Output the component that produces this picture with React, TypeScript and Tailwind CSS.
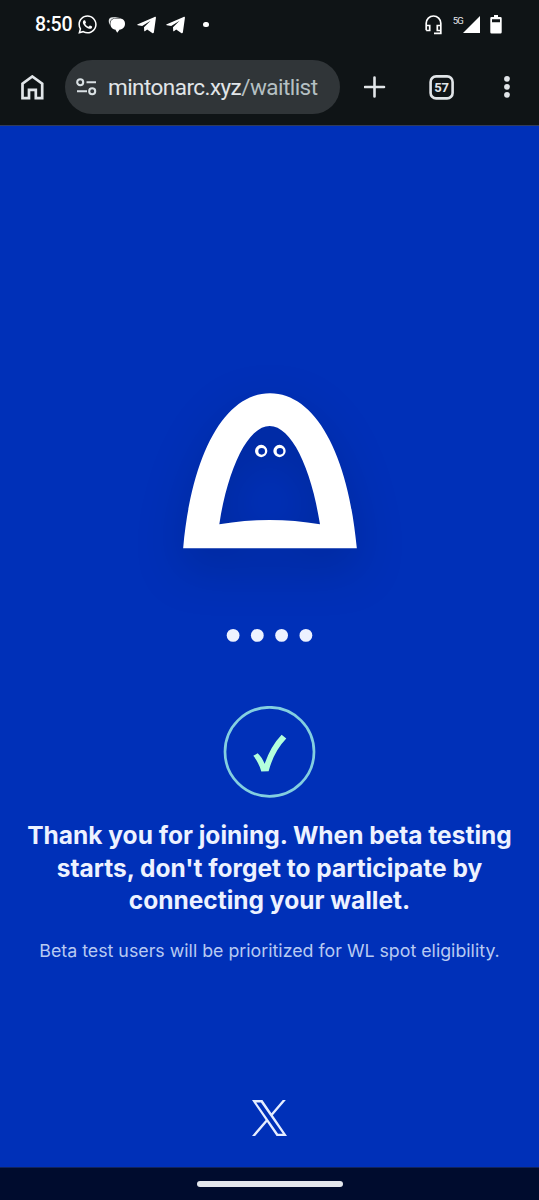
import { FaWhatsapp } from "react-icons/fa";

function PlaneIcon() {
  return (
    <svg className="h-[18px] w-[20px]" viewBox="0 0 20 18" fill="white">
      <path d="M.8 8.2 17.6.9c.9-.3 1.5.2 1.3 1.2l-2 14.2c-.2 1-.9 1.3-1.7.7l-5-3.5-2 1.6c-.4.4-1 .3-1-.4l-.2-3.5 6.6-6.4-8.4 5.3L.8 9.2c-.8-.3-.7-.7 0-1Z" />
    </svg>
  );
}

function StatusBar() {
  return (
    <div className="flex h-[49px] items-center pl-[35px] pr-[37px] text-white">
      <span className="w-[42px] whitespace-nowrap font-['Roboto',sans-serif] text-[19.5px] font-medium leading-none tracking-[-0.3px]">8:50</span>
      <FaWhatsapp className="size-[21px]" />
      <svg className="ml-[10px] h-[18px] w-[18px]" viewBox="0 0 18 18" fill="none">
        <path d="M1.8 9.2C-.2 5 .5 1.2 4.6 1.2L12 1l-6 1.3C3 3 1.5 5.5 1.8 9.2Z" fill="#e4e7e8" />
        <path d="M7.4 2.6h4.4c3.2 0 5.2 2.2 5.2 5.1 0 3.2-2.2 5.6-5.3 5.9L9.2 16.8 7.3 13.6C4.4 13.4 2.4 11 2.4 8c0-3.1 1.9-5.4 5-5.4Z" fill="white" />
      </svg>
      <div className="ml-[11px] flex gap-[9px]">
        <PlaneIcon />
        <PlaneIcon />
      </div>
      <span className="ml-[17px] size-[5.5px] rounded-full bg-white" />
      <div className="ml-auto flex items-center">
        <svg className="h-[20px] w-[17px]" viewBox="0 0 17 20" fill="none" stroke="white" strokeWidth="1.7">
          <path d="M1.2 15.2V8.3a7.3 7.3 0 0 1 14.6 0v10.1H9" />
          <path d="M1.2 10.5h3.5v5H1.2M15.8 10.5h-3.5v5h3.5" />
        </svg>
        <span className="ml-[11px] mb-[8px] font-['Roboto',sans-serif] text-[9.5px] leading-none tracking-[-0.8px] text-gray-200">5G</span>
        <svg className="h-[17px] w-[17px]" viewBox="0 0 17 17">
          <path d="M0 17 17 0v17Z" fill="white" />
        </svg>
        <svg className="ml-[10px] h-[19px] w-[12px]" viewBox="0 0 12 19">
          <path fill="white" fillRule="evenodd" d="M4 0h4v2h2.5A1.2 1.2 0 0 1 11.7 3.2v14A1.2 1.2 0 0 1 10.5 18.4h-9A1.2 1.2 0 0 1 .3 17.2v-14A1.2 1.2 0 0 1 1.5 2H4ZM2 4.3v2.9h8V4.3Z" />
        </svg>
      </div>
    </div>
  );
}

function BrowserBar() {
  return (
    <div className="flex h-[76px] items-start pl-[21px] pr-[29px] pt-[11px]">
      <svg className="mt-[15px] h-[25px] w-[23px]" viewBox="0 0 23 25" fill="none" stroke="#e1e5e8" strokeWidth="2.7">
        <path d="M1.5 23.2V8.6l9.8-7.1 9.9 7.1v14.6h-6.4v-8.4H8v8.4Z" />
      </svg>
      <div className="ml-[21px] flex h-[54px] w-[274.5px] items-center rounded-full bg-[#303538] pl-[11px]">
        <svg className="h-[18px] w-[21px]" viewBox="0 0 21 18" fill="none" stroke="#d9e0e3" strokeWidth="2.1">
          <circle cx="4.2" cy="4.2" r="3" />
          <path d="M10.5 4.2H20M1 13.3h10" />
          <circle cx="16.2" cy="13.3" r="3" />
        </svg>
        <span className="ml-[11px] whitespace-nowrap font-['Roboto',sans-serif] text-[22.5px] leading-none tracking-[-0.55px] text-[#e1e5e8]">
          mintonarc.xyz<span className="text-[#b5c0c3]">/waitlist</span>
        </span>
      </div>
      <svg className="ml-[24px] mt-[16px] size-[22px]" viewBox="0 0 22 22" stroke="#e1e5e8" strokeWidth="2.6" strokeLinecap="round">
        <path d="M10.5 1.5v19M1 11h19" />
      </svg>
      <svg className="ml-[43.5px] mt-[15px] size-[25px]" viewBox="0 0 25 25">
        <rect x="1.6" y="1.4" width="22" height="22" rx="5.5" fill="none" stroke="#e1e5e8" strokeWidth="2.6" />
        <text x="12.6" y="17" textAnchor="middle" fill="#e1e5e8" className="font-['Roboto',sans-serif] text-[13px] font-bold">57</text>
      </svg>
      <svg className="ml-auto mt-[15px] h-[23px] w-[6px]" viewBox="0 0 6 23" fill="#e1e5e8">
        <circle cx="3" cy="3.8" r="2.9" />
        <circle cx="3" cy="11.8" r="2.9" />
        <circle cx="3" cy="19.8" r="2.9" />
      </svg>
    </div>
  );
}

function Mascot() {
  return (
    <svg className="mt-[267px] h-[156px] w-[174px] shrink-0 overflow-visible drop-shadow-[0_18px_24px_rgba(0,0,0,0.17)]" viewBox="99 69 522 468">
      <path
        fill="white"
        fillRule="evenodd"
        d="M99.5 535C125 250 225 70 360 70S595 250 620.5 535ZM208 463Q359 437 510 463C483 290 423 168 359 168S235 290 208 463Z"
      />
      <path
        fill="white"
        fillRule="evenodd"
        d="M315 243a18.5 18.5 0 1 0 37 0a18.5 18.5 0 1 0-37 0ZM325 244a10 10 0 1 0 20 0a10 10 0 1 0-20 0ZM370 243a18.5 18.5 0 1 0 37 0a18.5 18.5 0 1 0-37 0ZM380 244a10 10 0 1 0 20 0a10 10 0 1 0-20 0Z"
      />
    </svg>
  );
}

export default function App() {
  return (
    <div className="flex h-[1200px] w-full flex-col overflow-hidden bg-[#0030b8]">
      <header className="h-[126px] shrink-0 border-b border-[#303c5c] bg-[#0f1416]">
        <StatusBar />
        <BrowserBar />
      </header>
      <main className="flex h-[1041px] shrink-0 flex-col items-center">
        <Mascot />
        <svg className="mt-[79px] h-[14px] w-[87px] shrink-0" viewBox="0 0 87 14" fill="#edf2ff">
          <circle cx="7.1" cy="7.4" r="6.4" />
          <circle cx="31.3" cy="7.4" r="6.4" />
          <circle cx="55.6" cy="7.4" r="6.4" />
          <circle cx="79.9" cy="7.4" r="6.4" />
        </svg>
        <svg className="mt-[64px] h-[92px] w-[93px] shrink-0" viewBox="0 0 93 92" fill="none">
          <circle cx="46.5" cy="45.8" r="44.5" stroke="#83cfe0" strokeWidth="2.7" />
          <path
            transform="translate(30.3 29.2) scale(.3333) translate(-130 -375)"
            fill="#b3ffdc"
            d="M130 437 143 429Q155 439 164 461 183 407 215 374L229 385Q192 423 176 483L154 484Q146 456 130 437Z"
          />
        </svg>
        <h1 className="mt-[21px] text-center font-['Inter',sans-serif] text-[24.5px] font-bold leading-[32.7px] text-[#edf2ff]">
          <span className="block whitespace-nowrap">Thank you for joining. When beta testing</span>
          <span className="block whitespace-nowrap">starts, don't forget to participate by</span>
          <span className="block whitespace-nowrap">connecting your wallet.</span>
        </h1>
        <p className="mt-[20px] whitespace-nowrap font-['Inter',sans-serif] text-[17.8px] leading-[27px] text-[#b8caf2]">
          Beta test users will be prioritized for WL spot eligibility.
        </p>
        <svg className="mt-auto mb-[31.5px] h-[36px] w-[35px]" viewBox="0 0 1200 1227" fill="#e5edff">
          <path d="M714.163 519.284L1160.89 0H1055.03L667.137 450.887L357.328 0H0L468.492 681.821L0 1226.37H105.866L515.491 750.218L842.672 1226.37H1200L714.137 519.284H714.163ZM569.165 687.828L521.697 619.934L144.011 79.6944H306.615L611.412 515.685L658.88 583.579L1055.08 1150.3H892.476L569.165 687.854V687.828Z" />
        </svg>
      </main>
      <footer className="flex h-[33px] shrink-0 justify-center border-t border-[#10245c] bg-[#000c2e] pt-[13px]">
        <span className="h-[6px] w-[146px] rounded-full bg-[#e3e7ed]" />
      </footer>
    </div>
  );
}
